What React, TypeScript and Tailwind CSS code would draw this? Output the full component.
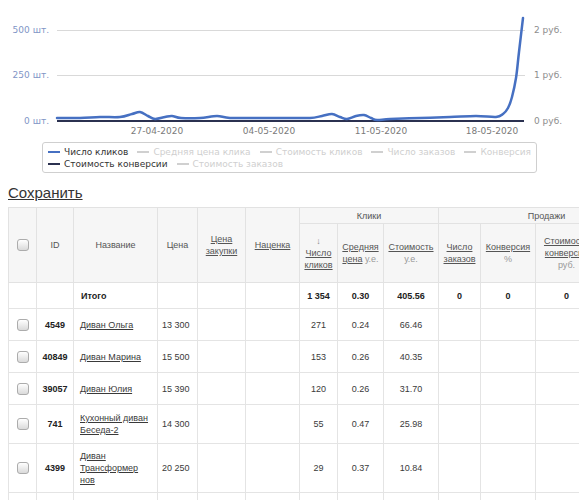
import type { ReactNode } from "react";

// Отчёт по кликам: график Highcharts-подобный сверху, таблица товаров снизу.

const BLUE = "#4670c2";
const NAVY = "#2b3150";

const clickPoints: [number, number][] = [
  [57, 118], [80, 118], [100, 117], [120, 117], [132, 114], [140, 112],
  [148, 116], [155, 119], [165, 117], [172, 116], [181, 118], [200, 118],
  [217, 116], [230, 118], [260, 118], [290, 118], [310, 118], [322, 116],
  [332, 114], [340, 117], [347, 119], [356, 116], [364, 115], [371, 118],
  [377, 120], [390, 119], [420, 118], [450, 117], [476, 116], [496, 117],
  [503, 114], [508, 108], [512, 97], [516, 78], [519, 52], [523, 18],
];

// catmull-rom -> bezier, чтобы линия шла плавно, как в оригинале
function smoothPath(pts: [number, number][]): string {
  let d = `M${pts[0][0]},${pts[0][1]}`;
  for (let i = 0; i < pts.length - 1; i++) {
    const p0 = pts[i - 1] ?? pts[i];
    const p1 = pts[i];
    const p2 = pts[i + 1];
    const p3 = pts[i + 2] ?? p2;
    const c1x = p1[0] + (p2[0] - p0[0]) / 6;
    const c1y = p1[1] + (p2[1] - p0[1]) / 6;
    const c2x = p2[0] - (p3[0] - p1[0]) / 6;
    const c2y = p2[1] - (p3[1] - p1[1]) / 6;
    d += ` C${c1x.toFixed(1)},${c1y.toFixed(1)} ${c2x.toFixed(1)},${c2y.toFixed(1)} ${p2[0]},${p2[1]}`;
  }
  return d;
}

function Chart() {
  const left = [
    { y: 30, label: "500 шт." },
    { y: 75, label: "250 шт." },
    { y: 121, label: "0 шт." },
  ];
  const right = [
    { y: 30, label: "2 руб." },
    { y: 75, label: "1 руб." },
    { y: 121, label: "0 руб." },
  ];
  const dates = [
    { x: 157, label: "27-04-2020" },
    { x: 269, label: "04-05-2020" },
    { x: 381, label: "11-05-2020" },
    { x: 492, label: "18-05-2020" },
  ];
  return (
    <svg width="579" height="140" className="block" fontFamily="'DejaVu Sans', sans-serif" fontSize="9">
      <line x1="57" x2="525" y1="30.5" y2="30.5" stroke="#d9d9d9" />
      <line x1="57" x2="525" y1="75.5" y2="75.5" stroke="#d9d9d9" />
      {left.map((t) => (
        <text key={t.label} x="49" y={t.y + 3} textAnchor="end" fill="#7f95c6">
          {t.label}
        </text>
      ))}
      {right.map((t) => (
        <text key={t.label} x="534" y={t.y + 3} fill="#8d8d8d">
          {t.label}
        </text>
      ))}
      {dates.map((t) => (
        <text key={t.label} x={t.x} y="134" textAnchor="middle" fill="#7a7a7a">
          {t.label}
        </text>
      ))}
      <line x1="57" x2="524" y1="121" y2="121" stroke={NAVY} strokeWidth="2" />
      <path d={smoothPath(clickPoints)} fill="none" stroke={BLUE} strokeWidth="2.5" strokeLinejoin="round" strokeLinecap="round" />
    </svg>
  );
}

function LegendItem({ color, label, active }: { color: string; label: string; active?: boolean }) {
  return (
    <span className="flex shrink-0 items-center gap-[4px] whitespace-nowrap">
      <span className="inline-block h-[2px] w-[12px]" style={{ backgroundColor: color }} />
      <span className={active ? "text-[#333]" : "text-[#cfcfcf]"}>{label}</span>
    </span>
  );
}

function Legend() {
  return (
    <div className="ml-[42px] mt-[2px] h-[31px] w-[495px] overflow-hidden rounded-[3px] border border-[#cfcfcf] px-[5px] pt-[3px] font-['DejaVu_Sans',sans-serif] text-[9px] leading-[12px]">
      <div className="flex gap-[9px]">
        <LegendItem color={BLUE} label="Число кликов" active />
        <LegendItem color="#d0d0d0" label="Средняя цена клика" />
        <LegendItem color="#d0d0d0" label="Стоимость кликов" />
        <LegendItem color="#d0d0d0" label="Число заказов" />
        <LegendItem color="#d0d0d0" label="Конверсия" />
      </div>
      <div className="flex gap-[9px]">
        <LegendItem color={NAVY} label="Стоимость конверсии" active />
        <LegendItem color="#d0d0d0" label="Стоимость заказов" />
      </div>
    </div>
  );
}

function Checkbox() {
  return (
    <span className="inline-block h-[12px] w-[12px] rounded-[3px] border border-[#acacac] bg-linear-to-b from-white to-[#dadada] align-middle" />
  );
}

function Th({ children, rowSpan, colSpan, className = "" }: { children?: ReactNode; rowSpan?: number; colSpan?: number; className?: string }) {
  return (
    <th
      rowSpan={rowSpan}
      colSpan={colSpan}
      className={`border border-[#e2e2e2] bg-[#f6f6f6] px-[3px] text-center align-middle font-normal text-[#555] ${className}`}
    >
      {children}
    </th>
  );
}

const cell = "border border-[#e4e4e4] px-[5px] align-middle";

type Row = {
  id: string;
  name: string;
  price: string;
  clicks: string;
  avg: string;
  cost: string;
  h: string;
};

const rows: Row[] = [
  { id: "4549", name: "Диван Ольга", price: "13 300", clicks: "271", avg: "0.24", cost: "66.46", h: "h-[32px]" },
  { id: "40849", name: "Диван Марина", price: "15 500", clicks: "153", avg: "0.26", cost: "40.35", h: "h-[32px]" },
  { id: "39057", name: "Диван Юлия", price: "15 390", clicks: "120", avg: "0.26", cost: "31.70", h: "h-[32px]" },
  { id: "741", name: "Кухонный диван Беседа-2", price: "14 300", clicks: "55", avg: "0.47", cost: "25.98", h: "h-[39px]" },
  { id: "4399", name: "Диван Трансформер нов", price: "20 250", clicks: "29", avg: "0.37", cost: "10.84", h: "h-[49px]" },
  { id: "2116", name: "Диван Лира", price: "12 900", clicks: "24", avg: "0.31", cost: "7.44", h: "h-[32px]" },
];

function ProductTable() {
  return (
    <table className="ml-[8px] mt-[5px] w-[646px] table-fixed border-collapse font-['Liberation_Sans',Arial,sans-serif] text-[9px] leading-[12px] text-[#3a3a3a]">
      <colgroup>
        <col className="w-[28px]" />
        <col className="w-[37px]" />
        <col className="w-[84px]" />
        <col className="w-[40px]" />
        <col className="w-[48px]" />
        <col className="w-[54px]" />
        <col className="w-[38px]" />
        <col className="w-[46px]" />
        <col className="w-[55px]" />
        <col className="w-[42px]" />
        <col className="w-[55px]" />
        <col className="w-[62px]" />
        <col className="w-[57px]" />
      </colgroup>
      <thead>
        <tr className="h-[16px]">
          <Th rowSpan={2}>
            <Checkbox />
          </Th>
          <Th rowSpan={2}>ID</Th>
          <Th rowSpan={2}>Название</Th>
          <Th rowSpan={2}>Цена</Th>
          <Th rowSpan={2}>
            <span className="underline">Цена закупки</span>
          </Th>
          <Th rowSpan={2}>
            <span className="underline">Наценка</span>
          </Th>
          <Th colSpan={3}>Клики</Th>
          <Th colSpan={4}>Продажи</Th>
        </tr>
        <tr className="h-[59px]">
          <Th>
            <span className="block text-[#888]">↓</span>
            <span className="underline">Число кликов</span>
          </Th>
          <Th>
            <span className="underline">Средняя</span>
            <br />
            <span className="underline">цена</span> <span className="text-[#999]">у.е.</span>
          </Th>
          <Th>
            <span className="underline">Стоимость</span>
            <br />
            <span className="text-[#999]">у.е.</span>
          </Th>
          <Th>
            <span className="underline">Число заказов</span>
          </Th>
          <Th>
            <span className="underline">Конверсия</span>
            <br />
            <span className="text-[#999]">%</span>
          </Th>
          <Th>
            <span className="underline">Стоимость конверсии</span>
            <br />
            <span className="text-[#999]">руб.</span>
          </Th>
          <Th>
            <span className="underline">Стоимость заказов</span>
            <br />
            <span className="text-[#999]">руб.</span>
          </Th>
        </tr>
      </thead>
      <tbody>
        <tr className="h-[26px] font-bold text-[#222]">
          <td className={cell} />
          <td className={cell} />
          <td className={`${cell} pl-[7px]`}>Итого</td>
          <td className={cell} />
          <td className={cell} />
          <td className={cell} />
          <td className={`${cell} text-center`}>1 354</td>
          <td className={`${cell} text-center`}>0.30</td>
          <td className={`${cell} text-center`}>405.56</td>
          <td className={`${cell} text-center`}>0</td>
          <td className={`${cell} text-center`}>0</td>
          <td className={`${cell} text-center`}>0</td>
          <td className={`${cell} text-center`}>0</td>
        </tr>
        {rows.map((r) => (
          <tr key={r.id} className={r.h}>
            <td className={`${cell} text-center`}>
              <Checkbox />
            </td>
            <td className={`${cell} px-[2px] text-center font-bold text-[#222]`}>{r.id}</td>
            <td className={`${cell} pl-[6px] pr-[3px]`}>
              <span className="underline">{r.name}</span>
            </td>
            <td className={`${cell} pl-[4px]`}>{r.price}</td>
            <td className={cell} />
            <td className={cell} />
            <td className={`${cell} text-center`}>{r.clicks}</td>
            <td className={`${cell} text-center`}>{r.avg}</td>
            <td className={`${cell} text-center`}>{r.cost}</td>
            <td className={cell} />
            <td className={cell} />
            <td className={cell} />
            <td className={cell} />
          </tr>
        ))}
      </tbody>
    </table>
  );
}

export default function App() {
  return (
    <div className="h-[500px] w-[579px] overflow-hidden bg-white">
      <Chart />
      <Legend />
      <a className="ml-[8px] mt-[11px] block w-fit font-['Liberation_Sans',Arial,sans-serif] text-[15px] leading-[18px] text-[#333] underline">
        Сохранить
      </a>
      <ProductTable />
    </div>
  );
}
